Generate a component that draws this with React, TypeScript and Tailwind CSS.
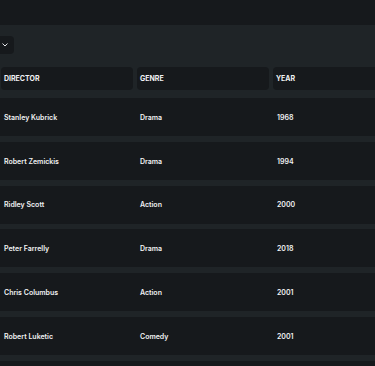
const rows = [
  { director: 'Stanley Kubrick', genre: 'Drama', year: '1968' },
  { director: 'Robert Zemickis', genre: 'Drama', year: '1994' },
  { director: 'Ridley Scott', genre: 'Action', year: '2000' },
  { director: 'Peter Farrelly', genre: 'Drama', year: '2018' },
  { director: 'Chris Columbus', genre: 'Action', year: '2001' },
  { director: 'Robert Luketic', genre: 'Comedy', year: '2001' },
];

export default function App() {
  return (
    <div className="w-[375px] h-[366px] overflow-hidden bg-[#1f2427] font-['Inter',sans-serif] text-[#f1f2f3]">
      <div className="h-[25px] bg-[#16191c]" />
      <div className="pt-[11px]">
        <button className="w-[14px] h-[18px] rounded-r-[4px] bg-[#16191c] flex items-center pl-[2px]">
          <svg width="6" height="4" viewBox="0 0 6 4" fill="none">
            <path d="M0.8 0.8 L3 3 L5.2 0.8" stroke="#e5e7eb" strokeWidth="1" strokeLinecap="round" strokeLinejoin="round" />
          </svg>
        </button>
      </div>
      <div className="mt-[13px] flex gap-[4px] pl-[1px]">
        {['DIRECTOR', 'GENRE', 'YEAR'].map((h) => (
          <div key={h} className="w-[132px] shrink-0 h-[23px] rounded-[4px] bg-[#16191c] flex items-center pt-[2px] px-[3px] text-[7px] font-bold">
            {h}
          </div>
        ))}
      </div>
      <div className="mt-[8px] flex flex-col gap-[5.8px]">
        {rows.map((r, i) => (
          <div key={i} className="h-[38px] shrink-0 bg-[#16191c] flex items-center pt-[2px] text-[7px] font-semibold">
            <div className="w-[140px] shrink-0 pl-[4px]">{r.director}</div>
            <div className="w-[137px] shrink-0">{r.genre}</div>
            <div>{r.year}</div>
          </div>
        ))}
        <div className="h-[38px] shrink-0 bg-[#16191c]" />
      </div>
    </div>
  );
}
